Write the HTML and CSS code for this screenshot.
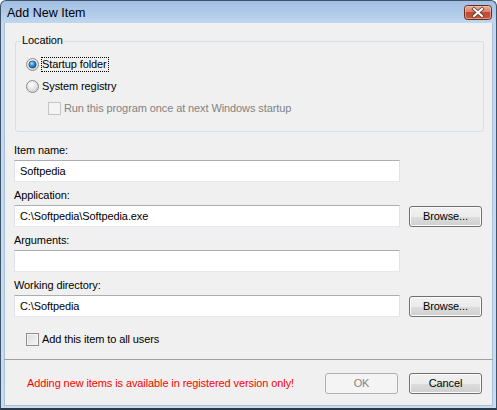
FILE: index.html
```html
<!DOCTYPE html>
<html>
<head>
<meta charset="utf-8">
<link rel="stylesheet" href="styles.css">
</head>
<body>
<div class="window">
  <div class="titlebar">
    <span class="title">Add New Item</span>
    <span class="close">
      <svg width="28" height="15" viewBox="0 0 28 15">
        <defs>
          <linearGradient id="cg" x1="0" y1="0" x2="0" y2="1">
            <stop offset="0" stop-color="#e8b3a3"/>
            <stop offset="0.45" stop-color="#d8806a"/>
            <stop offset="0.5" stop-color="#c24a31"/>
            <stop offset="1" stop-color="#c45a3c"/>
          </linearGradient>
        </defs>
        <rect x="0.5" y="0.5" width="27" height="14" rx="3" fill="url(#cg)" stroke="#6b2a1c"/>
        <rect x="1.5" y="1.5" width="25" height="12" rx="2" fill="none" stroke="#f0c8bb" stroke-opacity="0.6"/>
        <path d="M10 4 L18 11 M18 4 L10 11" stroke="#5a3a34" stroke-width="3.6" stroke-linecap="square"/>
        <path d="M10 4 L18 11 M18 4 L10 11" stroke="#ffffff" stroke-width="2" stroke-linecap="square"/>
      </svg>
    </span>
  </div>
  <div class="client">
    <div class="group">
      <span class="group-label">Location</span>
      <div class="opt">
        <svg class="radio" width="13" height="13" viewBox="0 0 13 13">
          <defs>
            <radialGradient id="rg1" cx="0.4" cy="0.35" r="0.7">
              <stop offset="0" stop-color="#ffffff"/>
              <stop offset="1" stop-color="#d4d4d4"/>
            </radialGradient>
            <radialGradient id="dot" cx="0.4" cy="0.35" r="0.7">
              <stop offset="0" stop-color="#aee6ff"/>
              <stop offset="0.5" stop-color="#2f8ad8"/>
              <stop offset="1" stop-color="#1a4f8e"/>
            </radialGradient>
          </defs>
          <circle cx="6.5" cy="6.5" r="6" fill="url(#rg1)" stroke="#8c8c8c"/>
          <circle cx="6.5" cy="6.5" r="3.6" fill="url(#dot)" stroke="#2b4a72" stroke-width="0.8"/>
        </svg>
        <span class="focus">Startup folder</span>
      </div>
      <div class="opt">
        <svg class="radio" width="13" height="13" viewBox="0 0 13 13">
          <defs>
            <radialGradient id="rg2" cx="0.4" cy="0.35" r="0.7">
              <stop offset="0" stop-color="#ffffff"/>
              <stop offset="1" stop-color="#cfcfcf"/>
            </radialGradient>
          </defs>
          <circle cx="6.5" cy="6.5" r="6" fill="url(#rg2)" stroke="#8c8c8c"/>
        </svg>
        <span>System registry</span>
      </div>
      <div class="opt sub disabled">
        <span class="check check-disabled"></span>
        <span>Run this program once at next Windows startup</span>
      </div>
    </div>

    <div class="field first">
      <div class="label">Item name:</div>
      <div class="row">
        <div class="input">Softpedia</div>
      </div>
    </div>
    <div class="field">
      <div class="label">Application:</div>
      <div class="row">
        <div class="input">C:\Softpedia\Softpedia.exe</div>
        <div class="btn browse">Browse...</div>
      </div>
    </div>
    <div class="field">
      <div class="label">Arguments:</div>
      <div class="row">
        <div class="input"></div>
      </div>
    </div>
    <div class="field">
      <div class="label">Working directory:</div>
      <div class="row">
        <div class="input">C:\Softpedia</div>
        <div class="btn browse">Browse...</div>
      </div>
    </div>

    <div class="allusers">
      <span class="check"></span>
      <span>Add this item to all users</span>
    </div>

    <div class="sep"></div>

    <div class="footer">
      <span class="warn">Adding new items is available in registered version only!</span>
      <div class="btn disabled-btn">OK</div>
      <div class="btn">Cancel</div>
    </div>
  </div>
</div>
</body>
</html>
```
FILE: styles.css
```css
html, body {
  margin: 0;
  padding: 0;
  background: #ffffff;
}
body {
  width: 497px;
  height: 410px;
  overflow: hidden;
  font-family: "Liberation Sans", Arial, sans-serif;
  font-size: 11px;
  letter-spacing: -0.1px;
  color: #000;
}
.window {
  width: 497px;
  height: 410px;
  box-sizing: border-box;
  border: 1px solid #3f5468;
  border-bottom: 2px solid #2c3a48;
  border-radius: 6px 6px 0 0;
  padding: 0 3px 2px;
  background: linear-gradient(to bottom, #a2bfe2 0px, #b3cdea 14px, #c2d8ef 23px, #c9dcf1 100%);
  display: flex;
  flex-direction: column;
}
.titlebar {
  height: 22px;
  display: flex;
  align-items: flex-start;
  padding-left: 3px;
}
.title {
  font-size: 12.5px;
  letter-spacing: 0;
  line-height: 22px;
  margin-top: 1px;
  color: #000;
}
.close {
  margin-left: auto;
  margin-right: 1px;
  margin-top: 4px;
  width: 28px;
  height: 15px;
  display: block;
}
.close svg { display: block; }
.client {
  flex: 1;
  background: #f0f0f0;
  padding: 0 11px 0 10px;
  box-shadow: inset 1px 0 0 #a9bfd6, inset -1px 0 0 #a9bfd6, inset 0 -1px 0 #a9bfd6;
  display: flex;
  flex-direction: column;
}
.group {
  position: relative;
  margin: 18px -2px 0 1px;
  border: 1px solid #d5dfe5;
  border-radius: 3px;
  padding: 11px 0 12px 10px;
}
.group-label {
  position: absolute;
  top: -8px;
  left: 5px;
  padding: 0 1px;
  line-height: 13px;
  background: #f0f0f0;
}
.opt {
  height: 22px;
  display: flex;
  align-items: center;
  gap: 3px;
  line-height: 13px;
}
.opt .radio { display: block; flex: none; }
.focus {
  border: 1px dotted #000;
  margin-left: -1px;
  padding: 0 1px 0 0;
}
.opt.sub { padding-left: 22px; }
.disabled { color: #838383; }
.check {
  width: 13px;
  height: 13px;
  box-sizing: border-box;
  border: 1px solid #8f8f8f;
  background: linear-gradient(135deg, #dcdcdc, #f6f6f6);
  box-shadow: inset 0 0 0 1px #f4f4f4;
  flex: none;
}
.check-disabled {
  border-color: #c4c4c4;
  background: #f4f4f4;
  box-shadow: none;
}
.field {
  margin-top: 7px;
}
.field.first {
  margin-top: 12px;
}
.label {
  line-height: 13px;
  height: 13px;
  margin-bottom: 3px;
}
.row {
  display: flex;
  align-items: flex-start;
  gap: 9px;
}
.input {
  width: 386px;
  height: 22px;
  box-sizing: border-box;
  background: #fff;
  border: 1px solid #e2e3ea;
  border-top-color: #abadb3;
  border-bottom-color: #e3e9ef;
  padding: 0 5px;
  line-height: 20px;
  white-space: nowrap;
}
.btn {
  width: 73px;
  height: 21px;
  box-sizing: border-box;
  border: 1px solid #707070;
  border-radius: 3px;
  background: linear-gradient(to bottom, #f2f2f2 0%, #ebebeb 50%, #dddddd 51%, #cfcfcf 100%);
  box-shadow: inset 0 0 0 1px #fbfbfb;
  text-align: center;
  line-height: 19px;
  flex: none;
}
.browse {
  margin-top: 1px;
}
.disabled-btn {
  border-color: #adb2b5;
  background: #f4f4f4;
  box-shadow: none;
  color: #838383;
}
.allusers {
  margin-top: 16px;
  padding-left: 12px;
  height: 13px;
  display: flex;
  align-items: center;
  gap: 3px;
  line-height: 13px;
}
.sep {
  margin: 13px -11px 0 -10px;
  height: 1px;
  background: #a0a0a0;
}
.footer {
  margin-top: 13px;
  display: flex;
  align-items: center;
  gap: 11px;
  padding-left: 13px;
}
.warn {
  flex: 1;
  color: #ff0000;
  line-height: 13px;
  white-space: nowrap;
}
```
